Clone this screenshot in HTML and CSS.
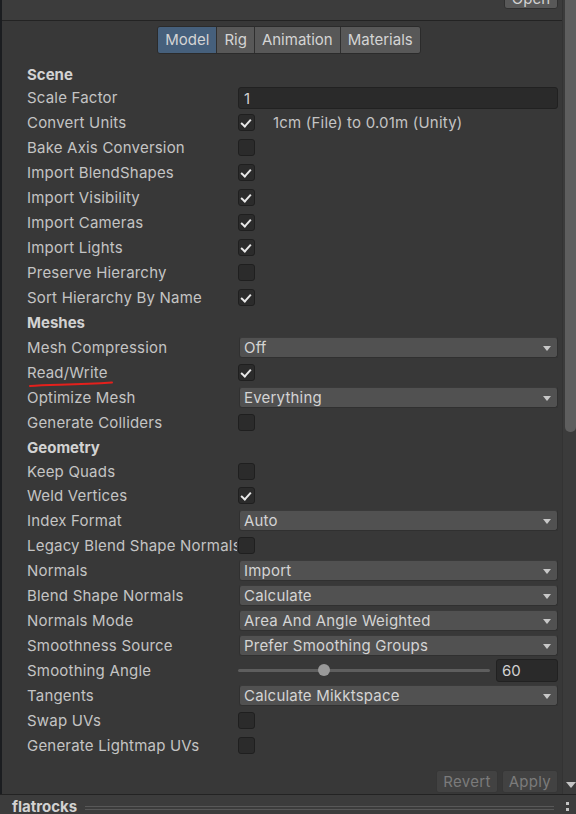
FILE: index.html
```html
<!DOCTYPE html>
<html lang="en">
<head>
    <meta charset="UTF-8">
    <meta name="viewport" content="width=device-width, initial-scale=1.0">
    <title>Model Import Settings</title>
    <link rel="stylesheet" href="styles.css">
</head>
<body>
    <div class="window">
        <div class="main">
            <div class="edge"></div>
            <div class="content">
                <div class="top-bar">
                    <button class="open-btn">Open</button>
                </div>
                <div class="tabs">
                    <div class="tab active">Model</div>
                    <div class="tab">Rig</div>
                    <div class="tab">Animation</div>
                    <div class="tab">Materials</div>
                </div>

                <div class="header first">Scene</div>
                <div class="row">
                    <span class="label">Scale Factor</span>
                    <div class="field">1</div>
                </div>
                <div class="row">
                    <span class="label">Convert Units</span>
                    <span class="check on"></span>
                    <span class="note">1cm (File) to 0.01m (Unity)</span>
                </div>
                <div class="row"><span class="label">Bake Axis Conversion</span><span class="check"></span></div>
                <div class="row"><span class="label">Import BlendShapes</span><span class="check on"></span></div>
                <div class="row"><span class="label">Import Visibility</span><span class="check on"></span></div>
                <div class="row"><span class="label">Import Cameras</span><span class="check on"></span></div>
                <div class="row"><span class="label">Import Lights</span><span class="check on"></span></div>
                <div class="row"><span class="label">Preserve Hierarchy</span><span class="check"></span></div>
                <div class="row"><span class="label">Sort Hierarchy By Name</span><span class="check on"></span></div>

                <div class="header">Meshes</div>
                <div class="row"><span class="label">Mesh Compression</span><div class="dropdown">Off</div></div>
                <div class="row">
                    <span class="label marked">Read/Write
                        <svg class="scribble" width="90" height="8" viewBox="0 0 90 8">
                            <path d="M2 6 C 20 4.5, 45 5, 84 2.5" fill="none" stroke="#e3201c" stroke-width="2" stroke-linecap="round"/>
                        </svg>
                    </span>
                    <span class="check on"></span>
                </div>
                <div class="row"><span class="label">Optimize Mesh</span><div class="dropdown">Everything</div></div>
                <div class="row"><span class="label">Generate Colliders</span><span class="check"></span></div>

                <div class="header geo">Geometry</div>
                <div class="row short"><span class="label">Keep Quads</span><span class="check"></span></div>
                <div class="row"><span class="label">Weld Vertices</span><span class="check on"></span></div>
                <div class="row"><span class="label">Index Format</span><div class="dropdown">Auto</div></div>
                <div class="row"><span class="label">Legacy Blend Shape Normals</span><span class="check"></span></div>
                <div class="row"><span class="label">Normals</span><div class="dropdown">Import</div></div>
                <div class="row"><span class="label">Blend Shape Normals</span><div class="dropdown">Calculate</div></div>
                <div class="row"><span class="label">Normals Mode</span><div class="dropdown">Area And Angle Weighted</div></div>
                <div class="row"><span class="label">Smoothness Source</span><div class="dropdown">Prefer Smoothing Groups</div></div>
                <div class="row">
                    <span class="label">Smoothing Angle</span>
                    <div class="slider">
                        <div class="track"><span class="knob" style="left: 34%"></span></div>
                        <div class="field num">60</div>
                    </div>
                </div>
                <div class="row"><span class="label">Tangents</span><div class="dropdown">Calculate Mikktspace</div></div>
                <div class="row"><span class="label">Swap UVs</span><span class="check"></span></div>
                <div class="row"><span class="label">Generate Lightmap UVs</span><span class="check"></span></div>

                <div class="actions">
                    <button class="btn">Revert</button>
                    <button class="btn">Apply</button>
                </div>
            </div>
            <div class="scrollbar">
                <div class="thumb"></div>
                <div class="arrow-down"></div>
            </div>
        </div>
        <div class="footer">
            <span class="asset-name">flatrocks</span>
            <span class="grip"></span>
            <span class="kebab"><i></i><i></i><i></i></span>
        </div>
    </div>
</body>
</html>
```

FILE: styles.css
```css
body {
    margin: 0;
    padding: 0;
    background-color: #383838;
    font-family: Inter, "Noto Sans", sans-serif;
    font-size: 15px;
    color: #c4c4c4;
    overflow: hidden;
}

.window {
    width: 576px;
    height: 814px;
    display: flex;
    flex-direction: column;
}

.main {
    display: flex;
    height: 794px;
    flex-shrink: 0;
}

.edge {
    width: 2px;
    background-color: #1b1d20;
}

.content {
    flex: 1;
    display: flex;
    flex-direction: column;
    padding-right: 4px;
    overflow: hidden;
}

.content > * {
    flex-shrink: 0;
}

.top-bar {
    height: 20px;
    border-bottom: 1px solid #232323;
    background-color: #3c3c3c;
    display: flex;
    justify-content: flex-end;
    align-items: flex-start;
    margin-right: -4px;
    padding-right: 4px;
    overflow: hidden;
}

.open-btn {
    height: 20px;
    width: 54px;
    margin-top: -11px;
    background-color: #585858;
    border: 1px solid #303030;
    border-radius: 3px;
    color: #d2d2d2;
    font-family: inherit;
    font-size: 15px;
    padding: 0;
    line-height: 18px;
}

.tabs {
    display: flex;
    align-self: center;
    margin-top: 5px;
    margin-left: 18px;
    border: 1px solid #2b2b2b;
    border-radius: 3px;
    overflow: hidden;
}

.tab {
    height: 26px;
    line-height: 26px;
    padding: 0 7px;
    background-color: #585858;
    color: #d4d4d4;
    border-left: 1px solid #2f2f2f;
}

.tab:first-child {
    border-left: none;
}

.tab.active {
    background-color: #46607c;
}

.header {
    height: 25px;
    line-height: 25px;
    padding-left: 25px;
    font-weight: 700;
    color: #d2d2d2;
}

.header.first {
    height: 20px;
    line-height: 20px;
    margin-top: 11px;
}

.header.geo {
    height: 24px;
}

.row {
    height: 25px;
    display: flex;
    align-items: center;
    padding-left: 25px;
}

.row.short {
    height: 24px;
}

.label {
    width: 210px;
    flex-shrink: 0;
    white-space: nowrap;
    overflow: hidden;
    letter-spacing: 0.2px;
}

.label.marked {
    position: relative;
    overflow: visible;
}

.scribble {
    position: absolute;
    left: 1px;
    top: 17px;
}

.field {
    flex: 1;
    height: 22px;
    line-height: 22px;
    box-sizing: border-box;
    background-color: #2a2a2a;
    border: 1px solid #212121;
    border-radius: 3px;
    padding-left: 5px;
    margin-left: 1px;
    color: #d2d2d2;
}

.check {
    width: 17px;
    height: 17px;
    box-sizing: border-box;
    margin-left: 1px;
    background-color: #2b2b2b;
    border: 1px solid #1f1f1f;
    border-radius: 3px;
    flex-shrink: 0;
    position: relative;
}

.check.on::after {
    content: "";
    position: absolute;
    left: 4px;
    top: 2px;
    width: 4px;
    height: 8px;
    border-right: 2px solid #e8e8e8;
    border-bottom: 2px solid #e8e8e8;
    transform: rotate(42deg);
}

.note {
    margin-left: 18px;
    letter-spacing: 0.2px;
}

.dropdown {
    flex: 1;
    height: 21px;
    line-height: 20px;
    box-sizing: border-box;
    margin-left: 2px;
    background-color: #515151;
    border: 1px solid #303030;
    border-top-color: #3a3a3a;
    border-radius: 3px;
    padding-left: 4px;
    color: #d4d4d4;
    position: relative;
    letter-spacing: 0.2px;
}

.dropdown::after {
    content: "";
    position: absolute;
    right: 6px;
    top: 8px;
    border-left: 4.5px solid transparent;
    border-right: 4.5px solid transparent;
    border-top: 5px solid #c8c8c8;
}

.slider {
    flex: 1;
    display: flex;
    align-items: center;
    margin-left: 1px;
}

.track {
    flex: 1;
    height: 3px;
    background-color: #5e5e5e;
    border-radius: 2px;
    position: relative;
    margin-right: 6px;
}

.knob {
    position: absolute;
    top: -5px;
    width: 12px;
    height: 12px;
    margin-left: -6px;
    border-radius: 50%;
    background-color: #999999;
}

.field.num {
    flex: 0 0 62px;
    margin-left: 0;
    height: 23px;
}

.actions {
    display: flex;
    justify-content: flex-end;
    gap: 4px;
    margin-top: 12px;
}

.btn {
    height: 23px;
    padding: 0 6px;
    background-color: #424242;
    border: 1px solid #363636;
    border-radius: 3px;
    color: #7b7b7b;
    font-family: inherit;
    font-size: 15px;
    letter-spacing: 0.3px;
}

.scrollbar {
    width: 14px;
    box-sizing: border-box;
    border-left: 1px solid #333333;
    background-color: #3b3b3b;
    display: flex;
    flex-direction: column;
    align-items: flex-end;
}

.thumb {
    width: 11px;
    height: 432px;
    background-color: #5e5e5e;
    border-radius: 0 0 5px 5px;
}

.arrow-down {
    margin-top: auto;
    margin-bottom: 6px;
    border-left: 5px solid transparent;
    border-right: 5px solid transparent;
    border-top: 6px solid #c4c4c4;
}

.footer {
    height: 19px;
    border-top: 1px solid #232323;
    background-color: #3c3c3c;
    display: flex;
    align-items: flex-start;
    padding-left: 12px;
    overflow: hidden;
}

.asset-name {
    font-weight: 700;
    color: #d2d2d2;
    line-height: 24px;
}

.grip {
    flex: 1;
    margin: 11px 6px 0 8px;
    height: 2px;
    border-top: 1px solid #585858;
    border-bottom: 1px solid #585858;
}

.kebab {
    width: 14px;
    display: flex;
    flex-direction: column;
    align-items: center;
    gap: 3px;
    padding-top: 7px;
    margin-right: 2px;
}

.kebab i {
    width: 3px;
    height: 3px;
    background-color: #c4c4c4;
}
```
